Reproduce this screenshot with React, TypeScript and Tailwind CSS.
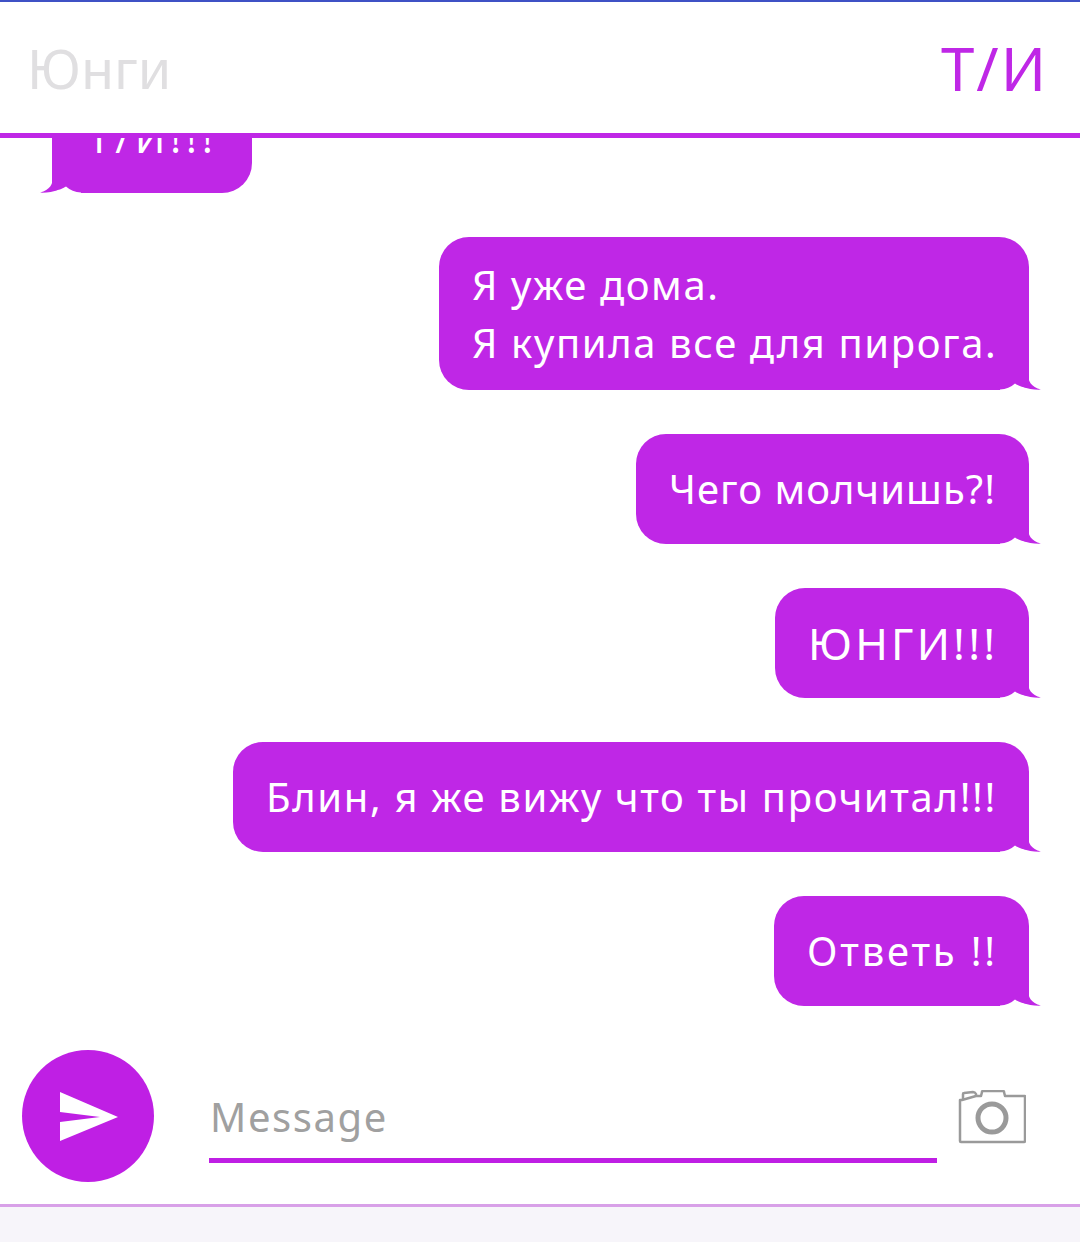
import React from "react";

const PURPLE = "#bf27e6";

function Tail({ left = false }: { left?: boolean }) {
  return (
    <svg
      width="41"
      height="16"
      viewBox="0 0 41 16"
      className={left ? "absolute left-[-12px] bottom-0 -scale-x-100" : "absolute right-[-12px] bottom-0"}
    >
      <path d="M0 16 L0 15.5 Q9 15 15 9.5 Q20 13 29 14 L29 16 Z" fill="#ffffff" />
      <path d="M28 0 C28 7 31 13 41 15.6 C34 15.8 28 15 22.5 12.8 L28 8 Z" fill={PURPLE} />
    </svg>
  );
}

function Bubble({
  width,
  height,
  text,
  lines,
}: {
  width: string;
  height: string;
  text: string;
  lines: string[];
}) {
  return (
    <div
      className={`relative shrink-0 self-end ${width} ${height} flex flex-col justify-center rounded-[30px] rounded-br-none bg-[#bf27e6] pl-[33px] text-white leading-[58px] whitespace-nowrap ${text}`}
    >
      {lines.map((l) => (
        <div key={l}>{l}</div>
      ))}
      <Tail />
    </div>
  );
}

export default function App() {
  return (
    <div
      className="w-[1080px] h-[1242px] flex flex-col bg-white overflow-hidden"
      style={{ fontFamily: '"Noto Sans", sans-serif' }}
    >
      <div className="h-[2px] bg-[#3f51c5]" />
      <header className="h-[131px] shrink-0 flex items-center justify-between pl-[27px] pr-[32px]">
        <span className="text-[#e0dfe1] text-[54px] leading-none">Юнги</span>
        <span className="text-[#bf27e6] text-[60px] leading-none tracking-[2px]">Т/И</span>
      </header>
      <div className="h-[5px] shrink-0 bg-[#bf27e6] relative z-10" />

      <main className="h-[912px] shrink-0 flex flex-col justify-end gap-[44px] pb-[44px] pr-[51px] overflow-hidden">
        <div className="relative shrink-0 self-start ml-[52px] w-[200px] h-[110px] flex items-center rounded-[30px] rounded-bl-none bg-[#bf27e6] pl-[36px] text-white text-[40px] leading-[58px] tracking-[5px] whitespace-nowrap">
          Т/И!!!
          <Tail left />
        </div>
        <Bubble width="w-[590px]" height="h-[153px]" text="text-[40px] tracking-[1.6px]" lines={["Я уже дома.", "Я купила все для пирога."]} />
        <Bubble width="w-[393px]" height="h-[110px]" text="text-[40px] tracking-[1.05px]" lines={["Чего молчишь?!"]} />
        <Bubble width="w-[254px]" height="h-[110px]" text="text-[44px] tracking-[3.2px]" lines={["ЮНГИ!!!"]} />
        <Bubble width="w-[796px]" height="h-[110px]" text="text-[40px] tracking-[1.65px]" lines={["Блин, я же вижу что ты прочитал!!!"]} />
        <Bubble width="w-[255px]" height="h-[110px]" text="text-[40px] tracking-[2.8px]" lines={["Ответь !!"]} />
      </main>

      <footer className="h-[154px] shrink-0 flex items-start pl-[22px]">
        <button className="w-[132px] h-[132px] shrink-0 rounded-full bg-[#bf1fe4] flex items-center justify-center">
          <svg className="ml-[2px] mt-[2px]" width="58" height="50" viewBox="0 0 58 50">
            <path d="M0 0 L58 25 L0 49 L0 30 L40 25 L0 20 Z" fill="#ffffff" />
          </svg>
        </button>
        <div className="ml-[55px] w-[728px] h-[113px] shrink-0 border-b-[5px] border-[#bf1fe4] flex items-end pb-[12px] pl-[1px] text-[#a0a0a0] text-[40px] leading-[58px] tracking-[1.6px]">
          Message
        </div>
        <svg className="ml-[21px] mt-[40px] shrink-0" width="68" height="54" viewBox="0 0 68 54" fill="none" stroke="#9a9a9a" strokeWidth="2.5" strokeLinejoin="round">
          <path d="M2 10 L2 51 Q2 52 3 52 L66 52 Q67 52 67 51 L67 6 L47 6 L46 2 Q46 1 45 1 L25 1 Q24 1 24 2 L23 6 L18 6 L4 10 Z" />
          <path d="M5 9 L5 4 Q5 3 6 3 L15 2 Q17 2 18 4 L18 6" />
          <circle cx="34" cy="28" r="14" strokeWidth="5" />
        </svg>
      </footer>

      <div className="h-[3px] shrink-0 bg-[#d8a0e8]" />
      <div className="flex-1 bg-[#f7f5fa]" />
    </div>
  );
}
